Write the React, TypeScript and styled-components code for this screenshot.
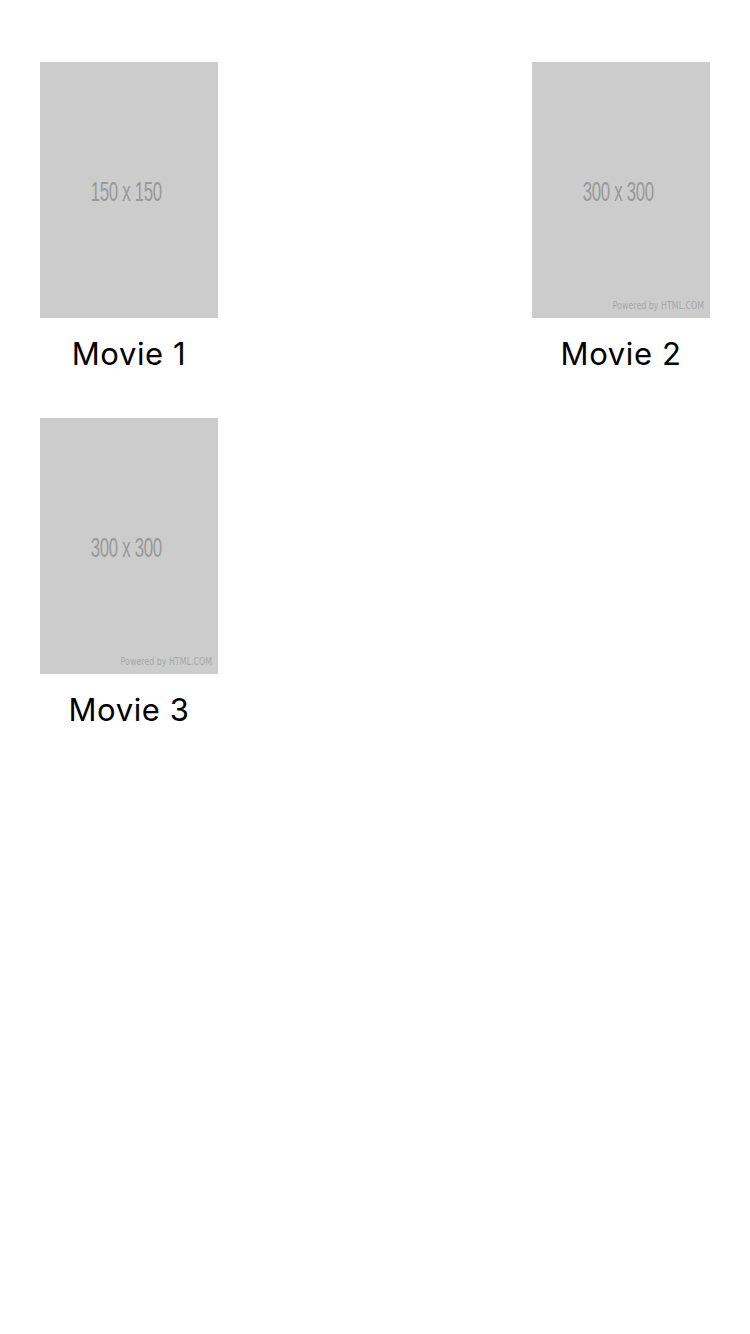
import React from 'react'
import styled, { createGlobalStyle } from 'styled-components'

const GlobalStyle = createGlobalStyle`
  html, body {
    margin: 0;
    padding: 0;
    background: #fff;
    font-family: Inter, "Liberation Sans", Arial, sans-serif;
  }
`

const Page = styled.div`
  width: 750px;
  min-height: 1334px;
  box-sizing: border-box;
  padding: 62px 40px 0 40px;
`

const Grid = styled.div`
  display: grid;
  grid-template-columns: 178px 178px;
  justify-content: space-between;
`

const Card = styled.div`
  display: flex;
  flex-direction: column;
  align-items: center;
  height: 356px;
`

const Poster = styled.div`
  position: relative;
  width: 178px;
  height: 256px;
  background: #cccccc;
  display: flex;
  align-items: center;
  justify-content: center;
  overflow: hidden;
`

const Size = styled.span`
  font-family: "Liberation Sans", Arial, sans-serif;
  font-size: 28px;
  color: #999999;
  transform: scale(0.6, 1);
  margin-left: -6px;
  margin-top: 4px;
  white-space: nowrap;
  letter-spacing: -0.5px;
`

const Powered = styled.span`
  position: absolute;
  right: 6px;
  bottom: 6px;
  font-family: "DejaVu Sans", sans-serif;
  font-size: 11px;
  color: #a8a8a8;
  transform: scale(0.72, 1);
  transform-origin: right center;
  white-space: nowrap;
`

const Title = styled.div`
  margin-top: 18px;
  font-family: Inter, "Liberation Sans", Arial, sans-serif;
  font-size: 31px;
  letter-spacing: 0.6px;
  line-height: 36px;
  color: #000;
`

const movies = [
  { title: 'Movie 1', size: '150 x 150', powered: false },
  { title: 'Movie 2', size: '300 x 300', powered: true },
  { title: 'Movie 3', size: '300 x 300', powered: true },
]

export default function App() {
  return (
    <>
      <GlobalStyle />
      <Page>
        <Grid>
          {movies.map(m => (
            <Card key={m.title}>
              <Poster>
                <Size>{m.size}</Size>
                {m.powered && <Powered>Powered by HTML.COM</Powered>}
              </Poster>
              <Title>{m.title}</Title>
            </Card>
          ))}
        </Grid>
      </Page>
    </>
  )
}
